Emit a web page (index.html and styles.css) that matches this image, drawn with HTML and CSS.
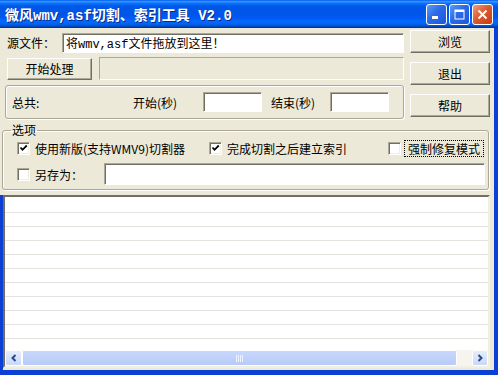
FILE: index.html
```html
<!DOCTYPE html>
<html lang="zh-CN">
<head>
    <meta charset="UTF-8">
    <title>微风wmv,asf切割、索引工具 V2.0</title>
    <link rel="stylesheet" href="styles.css">
</head>
<body>
    <div class="window">
        <div class="titlebar">
            <span class="title">微风wmv,asf切割、索引工具 V2.0</span>
            <div class="caption-btns">
                <span class="cap">
                    <svg width="11" height="11" viewBox="0 0 11 11"><rect x="1" y="7" width="6" height="3" fill="#fff"/></svg>
                </span>
                <span class="cap">
                    <svg width="11" height="11" viewBox="0 0 11 11"><rect x="1" y="1" width="9" height="9" fill="none" stroke="#fff" stroke-width="1"/><rect x="1" y="1" width="9" height="2" fill="#fff"/></svg>
                </span>
                <span class="cap close">
                    <svg width="11" height="11" viewBox="0 0 11 11"><path d="M1.5 1.5 L9.5 9.5 M9.5 1.5 L1.5 9.5" stroke="#fff" stroke-width="2"/></svg>
                </span>
            </div>
        </div>

        <div class="client">
            <div class="top">
                <div class="main">
                    <div class="row-src">
                        <label class="src-label">源文件：</label>
                        <input class="field src-field" type="text" value="将wmv,asf文件拖放到这里！">
                    </div>
                    <div class="row-proc">
                        <button class="btn btn-start">开始处理</button>
                        <div class="progress"></div>
                    </div>
                    <div class="group times">
                        <span class="lbl-total">总共:</span>
                        <span class="lbl-start">开始(秒)</span>
                        <input class="field time-field" type="text">
                        <span class="lbl-end">结束(秒)</span>
                        <input class="field time-field" type="text">
                    </div>
                </div>
                <div class="side">
                    <button class="btn">浏览</button>
                    <button class="btn">退出</button>
                    <button class="btn">帮助</button>
                </div>
            </div>

            <fieldset class="group options">
                <legend>选项</legend>
                <div class="opt-row">
                    <span class="opt opt-new">
                        <span class="chk"><svg width="9" height="9" viewBox="0 0 9 9"><path d="M1.5 3.5 L3.5 5.8 L7.8 1.5" fill="none" stroke="#000" stroke-width="1.8"/></svg></span>
                        使用新版(支持WMV9)切割器
                    </span>
                    <span class="opt opt-index">
                        <span class="chk"><svg width="9" height="9" viewBox="0 0 9 9"><path d="M1.5 3.5 L3.5 5.8 L7.8 1.5" fill="none" stroke="#000" stroke-width="1.8"/></svg></span>
                        完成切割之后建立索引
                    </span>
                    <span class="opt opt-fix">
                        <span class="chk"></span>
                        <span class="focus">强制修复模式</span>
                    </span>
                </div>
                <div class="opt-row saveas-row">
                    <span class="opt opt-save">
                        <span class="chk"></span>
                        另存为：
                    </span>
                    <input class="field save-field" type="text">
                </div>
            </fieldset>

            <div class="listwrap">
                <div class="list">
                    <div class="list-rows"></div>
                    <div class="hscroll">
                        <span class="sb-btn">
                            <svg width="8" height="8" viewBox="0 0 8 8"><path d="M5.5 1 L2.5 4 L5.5 7" fill="none" stroke="#2d4a8a" stroke-width="2"/></svg>
                        </span>
                        <span class="sb-thumb">
                            <svg width="8" height="7" viewBox="0 0 8 7"><path d="M0.5 0 V7 M2.5 0 V7 M4.5 0 V7 M6.5 0 V7" stroke="#eef3fe" stroke-width="1"/></svg>
                        </span>
                        <span class="sb-btn sb-right">
                            <svg width="8" height="8" viewBox="0 0 8 8"><path d="M2.5 1 L5.5 4 L2.5 7" fill="none" stroke="#2d4a8a" stroke-width="2"/></svg>
                        </span>
                    </div>
                </div>
            </div>
        </div>
    </div>
</body>
</html>
```

FILE: styles.css
```css
* {
    box-sizing: border-box;
}

body {
    margin: 0;
    width: 498px;
    height: 375px;
    overflow: hidden;
    font-family: "Noto Sans CJK SC", "Noto Sans", sans-serif;
    font-size: 12px;
    color: #000;
}

.window {
    width: 498px;
    height: 375px;
    background-color: #0b3fd6;
    display: flex;
    flex-direction: column;
}

/* title bar */
.titlebar {
    height: 28px;
    display: flex;
    align-items: center;
    padding-left: 5px;
    color: #fff;
    background: linear-gradient(to bottom, #0058ee 0%, #3593ff 5%, #1f83ff 9%, #0570fb 13%, #0262ee 18%, #0057e5 24%, #0055eb 56%, #005bf5 66%, #026afe 76%, #0062ef 86%, #0052d6 92%, #0040ab 96%, #003092 100%);
}

.title {
    flex: 1;
    font-family: "Liberation Mono", "Noto Sans CJK SC", monospace;
    font-size: 14px;
    font-weight: bold;
    white-space: nowrap;
    text-shadow: 1px 1px #0a2a8a;
}

.caption-btns {
    display: flex;
    gap: 2px;
    margin-right: 5px;
}

.cap {
    width: 21px;
    height: 21px;
    border: 1px solid #fff;
    border-radius: 3px;
    display: flex;
    align-items: center;
    justify-content: center;
    background: linear-gradient(135deg, #5d9bf8 0%, #2a6ae8 45%, #1c58d8 100%);
}

.cap.close {
    background: linear-gradient(135deg, #eda084 0%, #dc5a30 45%, #c63d14 100%);
}

/* client area */
.client {
    flex: 1;
    margin-right: 4px;
    margin-bottom: 5px;
    background-color: #ece9d8;
    display: flex;
    flex-direction: column;
}

.top {
    height: 92px;
    display: flex;
}

.main {
    width: 404px;
}

.row-src {
    margin-top: 4px;
    height: 21px;
    display: flex;
    align-items: center;
}

.src-label {
    width: 62px;
    padding-left: 7px;
}

.field {
    height: 20px;
    padding: 0 3px;
    font: inherit;
    color: #000;
    background-color: #fff;
    border: 1px solid;
    border-color: #aca899 #fff #fff #aca899;
    box-shadow: inset 1px 1px #716f64;
    outline: none;
}

.src-field {
    width: 342px;
    font-family: "Liberation Mono", "Noto Sans CJK SC", monospace;
}

.row-proc {
    margin-top: 4px;
    height: 23px;
    display: flex;
    align-items: center;
}

.btn {
    height: 23px;
    padding: 0;
    font: inherit;
    color: #000;
    background-color: #ece9d8;
    border: 1px solid;
    border-color: #fff #716f64 #716f64 #fff;
    box-shadow: inset -1px -1px #aca899;
}

.btn-start {
    width: 85px;
    height: 22px;
    margin-left: 7px;
}

.progress {
    width: 305px;
    height: 23px;
    margin-left: 7px;
    border: 1px solid;
    border-color: #aca899 #fff #fff #aca899;
}

.group {
    border: 1px solid #aca899;
    border-radius: 3px;
    box-shadow: inset 1px 1px #fff, 1px 1px #fff;
}

.times {
    width: 399px;
    height: 34px;
    margin: 5px 0 0 5px;
    padding-left: 6px;
    display: flex;
    align-items: center;
}

.lbl-total {
    width: 121px;
}

.lbl-start {
    width: 70px;
}

.time-field {
    width: 59px;
}

.lbl-end {
    width: 59px;
    margin-left: 9px;
}

.side {
    width: 80px;
    margin-left: 6px;
    padding-top: 2px;
    display: flex;
    flex-direction: column;
    gap: 9px;
}

/* options */
.options {
    width: 487px;
    margin: 4px 0 0 2px;
    padding: 0 0 4px 14px;
    min-width: 0;
}

.options legend {
    margin-left: -6px;
    padding: 0 1px;
    line-height: 12px;
    height: 12px;
}

.opt-row {
    height: 24px;
    display: flex;
    align-items: center;
}

.saveas-row {
    height: 22px;
    margin-top: 3px;
}

.opt {
    display: flex;
    align-items: center;
    gap: 5px;
    white-space: nowrap;
}

.opt-new {
    width: 192px;
}

.opt-index {
    width: 179px;
}

.opt-fix {
    gap: 3px;
}

.opt-save {
    width: 87px;
}

.focus {
    padding: 0 3px;
    border: 1px dotted #000;
    line-height: 15px;
}

.chk {
    width: 13px;
    height: 13px;
    flex: none;
    display: flex;
    align-items: center;
    justify-content: center;
    background-color: #fff;
    border: 1px solid;
    border-color: #aca899 #fff #fff #aca899;
    box-shadow: inset 1px 1px #716f64, inset -1px -1px #f1efe2;
}

.save-field {
    width: 381px;
    height: 22px;
}

/* list box */
.listwrap {
    flex: 1;
    margin-top: 5px;
    border-left: 3px solid #0b3fd6;
    display: flex;
}

.list {
    flex: 1;
    margin: 0 4px 2px 0;
    background-color: #fff;
    border: 2px solid;
    border-color: #716f64 #f1efe2 #f1efe2 #716f64;
    display: flex;
    flex-direction: column;
}

.list-rows {
    flex: 1;
    background: repeating-linear-gradient(to bottom, transparent 0, transparent 13px, #e4e2dc 13px, #e4e2dc 14px);
    background-position: 0 2px;
}

.hscroll {
    height: 16px;
    display: flex;
    background-color: #f5f4ef;
}

.sb-btn {
    width: 17px;
    height: 16px;
    display: flex;
    align-items: center;
    justify-content: center;
    border: 1px solid #fff;
    border-radius: 2px;
    background: linear-gradient(to bottom, #e6eefc, #c9d8f8);
}

.sb-right {
    width: 16px;
    margin-left: auto;
}

.sb-thumb {
    width: 435px;
    height: 16px;
    display: flex;
    align-items: center;
    justify-content: center;
    border: 1px solid #fff;
    border-radius: 2px;
    background: linear-gradient(to bottom, #c8d7fc, #b8cbf7);
}
```
